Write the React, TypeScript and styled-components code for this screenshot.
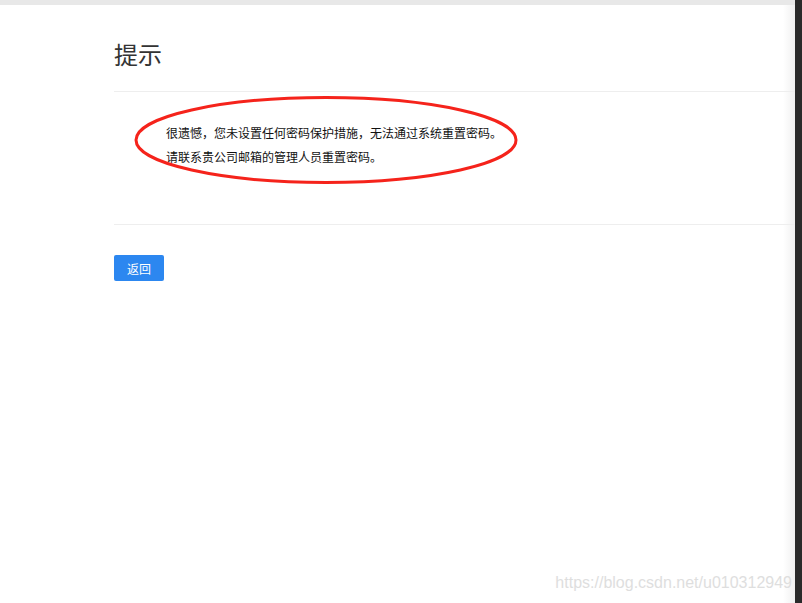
import React from "react";
import styled, { createGlobalStyle } from "styled-components";

const Global = createGlobalStyle`
  html, body { margin: 0; padding: 0; background: #fff; }
  body {
    font-family: "Liberation Sans", "Noto Sans CJK SC", Arial, sans-serif;
    color: #333;
    width: 802px;
    height: 603px;
    overflow: hidden;
  }
`;

const Frame = styled.div`
  display: flex;
  width: 802px;
  height: 603px;
  position: relative;
`;

const Main = styled.div`
  flex: 1;
  display: flex;
  flex-direction: column;
  background: linear-gradient(to left, #f0f0f0 0, #fff 12px);
  position: relative;
`;

const TopBar = styled.div`
  height: 5px;
  background: #e8e8e8;
`;

const Scrollbar = styled.div`
  width: 7px;
  background: #2a2a2a;
`;

const Content = styled.div`
  margin-left: 114px;
  display: flex;
  flex-direction: column;
`;

const Header = styled.div`
  padding-top: 33px;
  padding-bottom: 21px;
  border-bottom: 1px solid #eee;
`;

const Title = styled.h1`
  margin: 0;
  font-family: "Noto Sans CJK SC", sans-serif;
  font-size: 24px;
  font-weight: 400;
  line-height: 32px;
  color: #333;
`;

const Body = styled.div`
  padding: 29px 0 55px 52px;
  border-bottom: 1px solid #eee;
`;

const Line = styled.p`
  margin: 0;
  font-family: "Noto Sans CJK SC", sans-serif;
  font-size: 12px;
  line-height: 24px;
  color: #111;
`;

const Actions = styled.div`
  padding-top: 30px;
`;

const Button = styled.button`
  width: 50px;
  height: 26px;
  border: none;
  border-radius: 2px;
  background: #2c87f0;
  color: #fff;
  font-family: "Noto Sans CJK SC", sans-serif;
  font-size: 12px;
  padding: 0;
  cursor: pointer;
`;

const Annotation = styled.svg`
  position: absolute;
  left: 0;
  top: 0;
  pointer-events: none;
`;

const Watermark = styled.div`
  position: absolute;
  right: 3px;
  bottom: 11px;
  font-family: "Liberation Sans", Arial, sans-serif;
  font-size: 16px;
  color: #dedede;
`;

export default function App() {
  return (
    <>
      <Global />
      <Frame>
        <Main>
          <TopBar />
          <Content>
            <Header>
              <Title>提示</Title>
            </Header>
            <Body>
              <Line>很遗憾，您未设置任何密码保护措施，无法通过系统重置密码。</Line>
              <Line>请联系贵公司邮箱的管理人员重置密码。</Line>
            </Body>
            <Actions>
              <Button>返回</Button>
            </Actions>
          </Content>
          <Watermark>https://blog.csdn.net/u010312949</Watermark>
        </Main>
        <Scrollbar />
        <Annotation width="802" height="603">
          <ellipse cx="326" cy="140" rx="190" ry="42.5" fill="none" stroke="#f5231b" strokeWidth="3" />
        </Annotation>
      </Frame>
    </>
  );
}
